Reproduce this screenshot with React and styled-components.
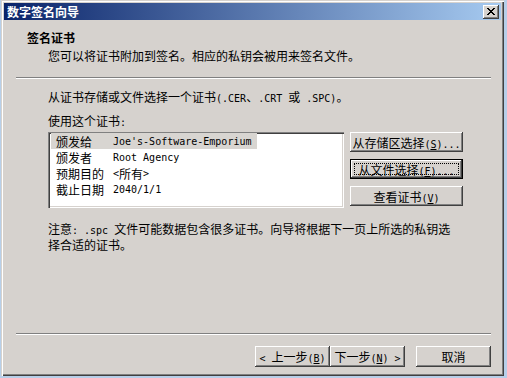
import React from 'react';
import styled, { createGlobalStyle } from 'styled-components';

const FACE = '#d6d2ce';

const GlobalStyle = createGlobalStyle`
  html, body {
    margin: 0;
    padding: 0;
    background: #b7cfe9;
  }
  body {
    font-family: "Noto Sans CJK SC", "Liberation Sans", sans-serif;
    font-size: 12px;
    color: #000;
  }
`;

const Window = styled.div`
  box-sizing: border-box;
  width: 503px;
  height: 376px;
  margin-left: 1px;
  padding: 3px;
  background: ${FACE};
  box-shadow: inset 1px 1px ${FACE}, inset 2px 2px #fff,
    inset -1px -1px #404040, inset -2px -2px #808080;
  display: flex;
  flex-direction: column;
`;

const TitleBar = styled.div`
  height: 17px;
  display: flex;
  align-items: center;
  justify-content: space-between;
  padding: 0 2px 0 3px;
  background: linear-gradient(to right, #0a246a, #a6caf0);
`;

const TitleText = styled.span`
  color: #fff;
  font-weight: bold;
  line-height: 17px;
`;

const CloseButton = styled.div`
  box-sizing: border-box;
  width: 16px;
  height: 14px;
  display: flex;
  align-items: center;
  justify-content: center;
  background: ${FACE};
  box-shadow: inset -1px -1px #404040, inset 1px 1px #fff,
    inset -2px -2px #808080;
`;

const Header = styled.div`
  padding: 10px 0 0 23px;
`;

const HeaderTitle = styled.div`
  font-weight: bold;
  line-height: 16px;
`;

const HeaderSub = styled.div`
  margin-top: 2px;
  padding-left: 21px;
  line-height: 16px;
`;

const Separator = styled.div`
  height: 1px;
  background: #808080;
  border-bottom: 1px solid #fff;
  margin: ${(p) => p.$top}px 10px 0 12px;
`;

const Body = styled.div`
  padding: 10px 0 0 44px;
`;

const Line = styled.div`
  line-height: 16px;
  margin-top: ${(p) => p.$top || 0}px;
  white-space: nowrap;
`;

const L = styled.span`
  font-family: "DejaVu Sans Mono", "Liberation Mono", monospace;
  font-size: 10px;
`;

const CertRow = styled.div`
  display: flex;
  gap: 6px;
  margin-top: 1px;
`;

const ListBox = styled.div`
  box-sizing: border-box;
  width: 296px;
  height: 76px;
  padding: 1px 0 0 3px;
  background: #fff;
  box-shadow: inset 1px 1px #808080, inset 2px 2px #404040,
    inset -1px -1px #fff, inset -2px -2px ${FACE};
`;

const Item = styled.div`
  display: flex;
  align-items: center;
  width: fit-content;
  height: 16px;
  padding: 0 6px 0 5px;
  white-space: nowrap;
  background: ${(p) => (p.$selected ? '#d8d5d1' : 'transparent')};
`;

const ItemLabel = styled.span`
  width: 57px;
`;

const SideButtons = styled.div`
  display: flex;
  flex-direction: column;
  gap: 7px;
`;

const Button = styled.button`
  position: relative;
  box-sizing: border-box;
  width: ${(p) => p.$w}px;
  height: ${(p) => p.$h}px;
  padding: 0;
  border: ${(p) => (p.$default ? '1px solid #000' : 'none')};
  background: ${FACE};
  font-family: inherit;
  font-size: 12px;
  color: #000;
  white-space: nowrap;
  box-shadow: inset -1px -1px #404040, inset 1px 1px #fff,
    inset -2px -2px #808080;

  &::after {
    content: '';
    display: ${(p) => (p.$default ? 'block' : 'none')};
    position: absolute;
    inset: 3px;
    border: 1px dotted #000;
  }
`;

const Note = styled.div`
  margin-top: 14px;
  line-height: 14px;
  white-space: nowrap;
`;

const Spacer = styled.div`
  flex: 1;
`;

const Footer = styled.div`
  display: flex;
  justify-content: flex-end;
  padding: 11px 10px 6px 0;
`;

const Gap = styled.div`
  width: 11px;
`;

const Key = ({ k, dots }) => (
  <L>
    (<u>{k}</u>){dots ? '...' : ''}
  </L>
);

const rows = [
  ['颁发给', <L>Joe's-Software-Emporium</L>],
  ['颁发者', <L>Root Agency</L>],
  ['预期目的', <><L>&lt;</L>所有<L>&gt;</L></>],
  ['截止日期', <L>2040/1/1</L>],
];

export default function App() {
  return (
    <>
      <GlobalStyle />
      <Window>
        <TitleBar>
          <TitleText>数字签名向导</TitleText>
          <CloseButton>
            <svg width="8" height="7" viewBox="0 0 8 7">
              <path
                d="M0 0h2v1h1v1h2V1h1V0h2v1H7v1H6v1H5v1h1v1h1v1h1v1H6V6H5V5H3v1H2v1H0V6h1V5h1V4h1V3H2V2H1V1H0z"
                fill="#000"
              />
            </svg>
          </CloseButton>
        </TitleBar>

        <Header>
          <HeaderTitle>签名证书</HeaderTitle>
          <HeaderSub>您可以将证书附加到签名。相应的私钥会被用来签名文件。</HeaderSub>
        </Header>
        <Separator $top={13} />

        <Body>
          <Line>
            从证书存储或文件选择一个证书<L>(.CER</L>、<L>.CRT </L>或<L> .SPC)</L>。
          </Line>
          <Line $top={6}>
            使用这个证书<L>:</L>
          </Line>
          <CertRow>
            <ListBox>
              {rows.map(([label, value], i) => (
                <Item key={label} $selected={i === 0}>
                  <ItemLabel>{label}</ItemLabel>
                  {value}
                </Item>
              ))}
            </ListBox>
            <SideButtons>
              <Button $w={113} $h={20}>
                从存储区选择<Key k="S" dots />
              </Button>
              <Button $w={113} $h={20} $default>
                从文件选择<Key k="F" dots />
              </Button>
              <Button $w={113} $h={20}>
                查看证书<Key k="V" />
              </Button>
            </SideButtons>
          </CertRow>
          <Note>
            注意<L>: .spc </L>文件可能数据包含很多证书。向导将根据下一页上所选的私钥选
            <br />
            择合适的证书。
          </Note>
        </Body>

        <Spacer />
        <Separator $top={0} />
        <Footer>
          <Button $w={75} $h={21}>
            <L>&lt; </L>上一步<Key k="B" />
          </Button>
          <Button $w={75} $h={21}>
            下一步<Key k="N" />
            <L> &gt;</L>
          </Button>
          <Gap />
          <Button $w={75} $h={21}>
            取消
          </Button>
        </Footer>
      </Window>
    </>
  );
}
